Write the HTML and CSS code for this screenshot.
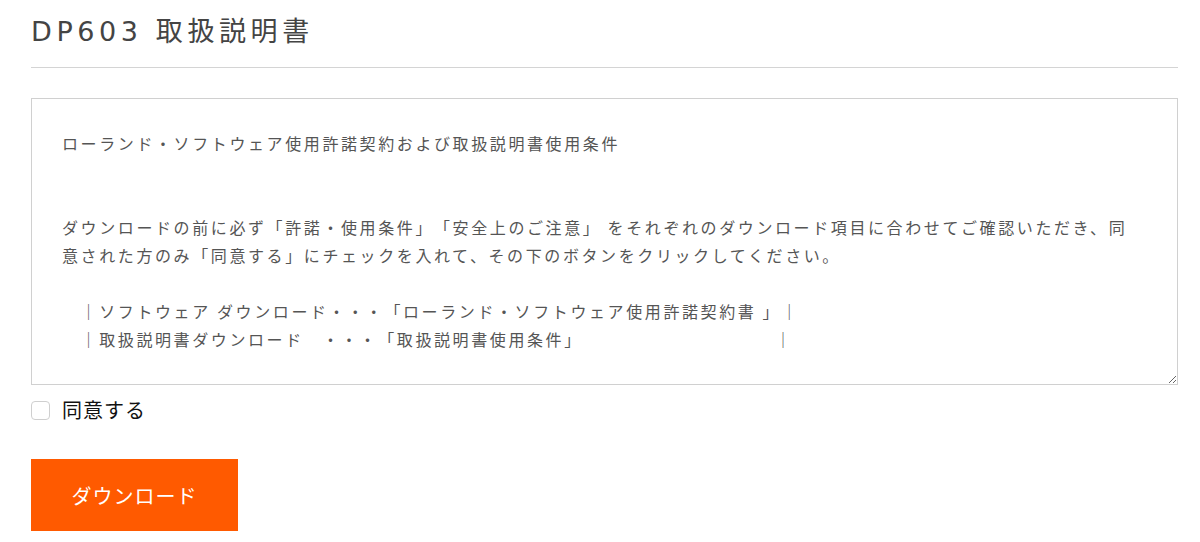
FILE: index.html
```html
<!DOCTYPE html>
<html lang="ja">
<head>
    <meta charset="UTF-8">
    <meta name="viewport" content="width=device-width, initial-scale=1.0">
    <title>DP603 取扱説明書</title>
    <link rel="stylesheet" href="styles.css">
</head>
<body>

    <div class="manual">
        <h1 class="manual-title">DP603 取扱説明書</h1>

        <form class="agree-form">
            <!-- License text, read only -->
            <textarea class="terms" readonly>ローランド・ソフトウェア使用許諾契約および取扱説明書使用条件


ダウンロードの前に必ず「許諾・使用条件」「安全上のご注意」 をそれぞれのダウンロード項目に合わせてご確認いただき、同意された方のみ「同意する」にチェックを入れて、その下のボタンをクリックしてください。

　｜ソフトウェア ダウンロード・・・「ローランド・ソフトウェア使用許諾契約書 」｜
　｜取扱説明書ダウンロード　・・・「取扱説明書使用条件」　　　　　　　　　　 ｜</textarea>

            <label class="agree">
                <input type="checkbox" name="agree">
                <span>同意する</span>
            </label>

            <button type="submit" class="download-btn">ダウンロード</button>
        </form>
    </div>

</body>
</html>
```

FILE: styles.css
```css
/* Base */
*, *::before, *::after {
    box-sizing: border-box;
    margin: 0;
    padding: 0;
}

body {
    font-family: "Noto Sans CJK JP", "Noto Sans", sans-serif;
    background: #ffffff;
    color: #222;
    text-spacing-trim: space-all; /* keep full-width brackets */
}

.manual {
    padding: 14px 22px 0 31px;
}

/* Header */
.manual-title {
    font-family: "DejaVu Sans", "Noto Sans CJK JP", sans-serif;
    font-size: 27px;
    font-weight: 400;
    line-height: 36px;
    letter-spacing: 4.6px;
    color: #444;
    padding-bottom: 17px;
    border-bottom: 1px solid #d4d4d4;
}

/* Form */
.agree-form {
    display: flex;
    flex-direction: column;
    align-items: flex-start;
    margin-top: 30px;
}

.terms {
    display: block;
    width: 100%;
    height: 287px;
    padding: 30px 36px 30px 30px;
    border: 1px solid #d0d0d0;
    border-radius: 0;
    font-family: "Noto Sans CJK JP", "Noto Sans", sans-serif;
    font-size: 16px;
    line-height: 28px;
    letter-spacing: 2.6px;
    color: #555;
    background: #fff;
    resize: both;
    outline: none;
    overflow: hidden;
    text-spacing-trim: space-all;
}

.agree {
    display: flex;
    align-items: center;
    gap: 12px;
    margin-top: 11px;
    font-size: 20px;
    line-height: 28px;
    letter-spacing: 1px;
    color: #111;
    cursor: pointer;
}

.agree input[type="checkbox"] {
    appearance: none;
    -webkit-appearance: none;
    width: 19px;
    height: 19px;
    border: 1px solid #cfcfcf;
    border-radius: 4px;
    background: #fff;
    cursor: pointer;
}

.agree input[type="checkbox"]:checked {
    background: #ff5a00;
    border-color: #ff5a00;
}

/* Button */
.download-btn {
    margin-top: 35px;
    width: 207px;
    height: 72px;
    border: none;
    background: #ff5a00;
    color: #fff;
    font-family: "Noto Sans CJK JP", "Noto Sans", sans-serif;
    font-size: 20px;
    letter-spacing: 1px;
    cursor: pointer;
}

.download-btn:hover {
    background: #e85200;
}
```
